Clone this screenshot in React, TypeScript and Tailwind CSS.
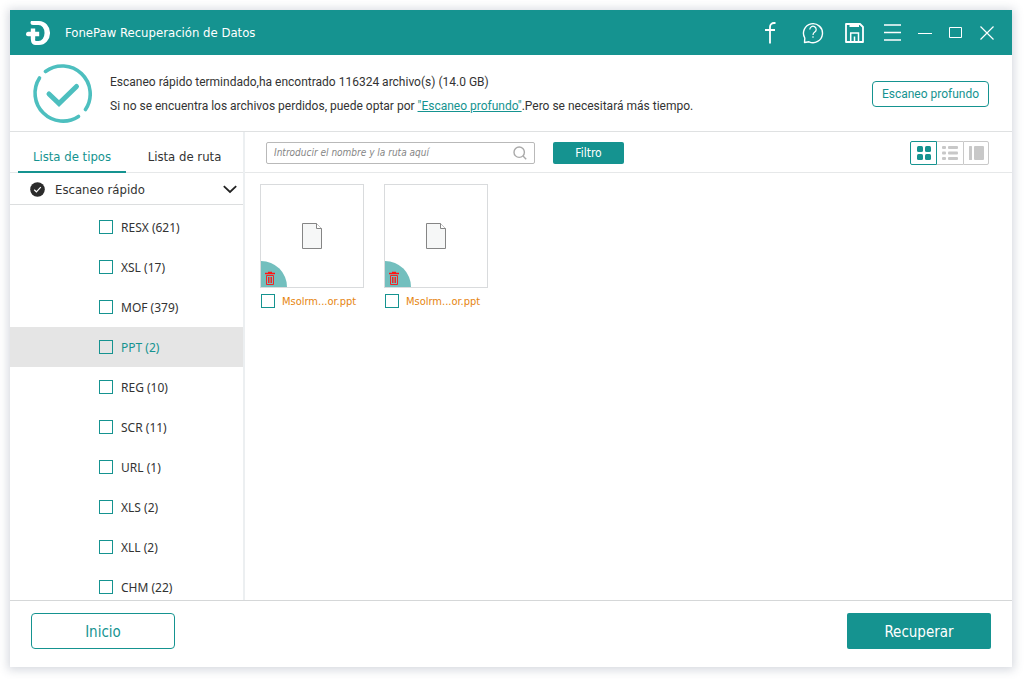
import { useState } from 'react';
import type { ReactNode } from 'react';

const fileTypes = [
  { name: 'RESX', count: 621 },
  { name: 'XSL', count: 17 },
  { name: 'MOF', count: 379 },
  { name: 'PPT', count: 2 },
  { name: 'REG', count: 10 },
  { name: 'SCR', count: 11 },
  { name: 'URL', count: 1 },
  { name: 'XLS', count: 2 },
  { name: 'XLL', count: 2 },
  { name: 'CHM', count: 22 },
];

const files = [
  { id: 'file-1', name: 'Msolrm...or.ppt' },
  { id: 'file-2', name: 'Msolrm...or.ppt' },
];

const checkboxClass =
  'size-3.5 shrink-0 appearance-none border border-[#159390] bg-transparent checked:bg-[#159390]';

function IconButton({ label, className, children }: { label: string; className: string; children: ReactNode }) {
  return (
    <button type="button" aria-label={label} className={`flex items-center justify-center ${className}`}>
      {children}
    </button>
  );
}

function TitleBar() {
  return (
    <header className="flex h-[45px] shrink-0 items-center bg-[#159390] pt-px pr-[18px] pl-4 text-white">
      <svg viewBox="0 0 24 24" className="size-6" fill="currentColor" aria-hidden="true">
        <path d="M5 0h8A11 11.800 0 0 1 24 12a11 11.800 0 0 1-11 12H9.500A4.500 4.500 0 0 1 5 19.500V18h4v.8a1.200 1.200 0 0 0 1.200 1.200h2.300A6 7.800 0 0 0 18.500 12a6 7.800 0 0 0-6-8H7A2.500 2.500 0 0 1 4.500 1.500z" />
        <path d="M4.800 7.500h4.400v3.200h4v4.600h-4V18.500H4.800v-3.200H2A2.200 2.200 0 0 1 0 13a2.300 2.300 0 0 1 2-2.300h2.800z" />
      </svg>
      <h1 className="ml-[15px] grow text-[13px]">FonePaw Recuperación de Datos</h1>
      <div className="flex gap-5">
        <IconButton label="Facebook" className="size-[22px]">
          <svg viewBox="0 0 22 22" className="size-[22px]" fill="none" stroke="currentColor" strokeWidth="1.800">
            <path d="M15.500 1h-1.500A4 4 0 0 0 10 5V21.500M5 8h10" />
          </svg>
        </IconButton>
        <IconButton label="Ayuda" className="size-[22px]">
          <svg viewBox="0 0 22 22" className="size-[22px]" fill="none" stroke="currentColor" strokeWidth="1.400" strokeLinejoin="round">
            <path d="M2.500 20.500l.3-4.500A9.500 9.500 0 1 1 7 19.800z" />
            <path d="M7.800 7.500a3.200 3.200 0 1 1 5 2.600c-1.200.8-1.800 1.200-1.800 2.900M11 14.300v1.400" strokeWidth="1.200" />
          </svg>
        </IconButton>
        <IconButton label="Guardar" className="size-[22px]">
          <svg viewBox="0 0 22 22" className="size-[22px]" fill="none" stroke="currentColor" strokeWidth="1.800">
            <path d="M2 2h14l3 3v15H2z" strokeLinejoin="round" />
            <path d="M5.500 2h9.500v3H5.500z" fill="currentColor" stroke="none" />
            <path d="M6.700 20V11h7.800v9M10.500 14.500V19" strokeWidth="1.500" />
          </svg>
        </IconButton>
      </div>
      <IconButton label="Menú" className="ml-4 size-5">
        <svg viewBox="0 0 20 20" className="size-5" fill="none" stroke="currentColor" strokeWidth="1.600">
          <path d="M2 2h17M2 9.500h17M2 17h17" />
        </svg>
      </IconButton>
      <div className="ml-4 flex gap-[17px]">
        <IconButton label="Minimizar" className="size-3.5">
          <svg viewBox="0 0 14 14" className="size-3.5" fill="none" stroke="currentColor">
            <path d="M0 7.500h14" />
          </svg>
        </IconButton>
        <IconButton label="Maximizar" className="size-3.5">
          <svg viewBox="0 0 14 14" className="size-3.5" fill="none" stroke="currentColor">
            <path d="M.5 1.500h12v10H.5z" />
          </svg>
        </IconButton>
        <IconButton label="Cerrar" className="size-3.5">
          <svg viewBox="0 0 14 14" className="size-3.5" fill="none" stroke="currentColor" strokeWidth="1.200">
            <path d="M.5.5l13 13M13.500.5l-13 13" />
          </svg>
        </IconButton>
      </div>
    </header>
  );
}

function ScanStatus() {
  return (
    <section className="flex h-[77px] shrink-0 items-center border-b border-[#dfe1e2] pt-px pr-[23px] pl-[22px]">
      <svg viewBox="0 0 60 60" className="size-[60px] shrink-0" fill="none" stroke="#4dbfbf" strokeLinecap="round" aria-hidden="true">
        <path d="M13.500 7.500A28 28 0 0 1 53.500 45.500" strokeWidth="3.600" />
        <path d="M7.500 14A28 28 0 0 0 46.500 52.500" strokeWidth="3.600" />
        <path d="M17 30l10 9.500L44.500 22.500" strokeWidth="5" strokeLinejoin="miter" />
      </svg>
      <div className="ml-[18px] grow font-[Roboto,sans-serif] text-[12px] leading-6 text-[#333]">
        <p>Escaneo rápido termindado,ha encontrado 116324 archivo(s) (14.0 GB)</p>
        <p>
          Si no se encuentra los archivos perdidos, puede optar por{' '}
          <a href="#escaneo-profundo" className="text-[#159390] underline">
            "Escaneo profundo"
          </a>
          .Pero se necesitará más tiempo.
        </p>
      </div>
      <button type="button" className="h-[26px] w-[117px] shrink-0 rounded border border-[#159390] font-[Roboto,sans-serif] text-[12px] text-[#159390]">
        Escaneo profundo
      </button>
    </section>
  );
}

function Sidebar({ selected, onSelect }: { selected: string; onSelect: (name: string) => void }) {
  return (
    <aside className="flex min-h-0 w-[235px] shrink-0 flex-col border-r-2 border-[#eceff1]">
      <div role="tablist" className="flex h-[41px] shrink-0 border-b border-[#e6e8e9] pl-2 text-[13px]">
        <button type="button" role="tab" aria-selected="true" className="-mb-px w-27 border-b-2 border-[#159390] pt-2.5 text-[#159390]">
          Lista de tipos
        </button>
        <button type="button" role="tab" aria-selected="false" className="grow pt-2.5 text-[#333]">
          Lista de ruta
        </button>
      </div>
      <button type="button" aria-expanded="true" className="flex h-8 shrink-0 items-center border-b border-[#dcdedf] pt-px pr-1.5 pl-5 text-[13px] text-[#333]">
        <svg viewBox="0 0 15 15" className="size-[15px]" aria-hidden="true">
          <circle cx="7.500" cy="7.500" r="7.300" fill="#2b2b2b" />
          <path d="M4.200 7.800l2.200 2 4.400-4.600" fill="none" stroke="#fff" strokeWidth="1.200" />
        </svg>
        <span className="ml-2.5 grow pt-0.5 text-left">Escaneo rápido</span>
        <svg viewBox="0 0 14 14" className="size-3.5" fill="none" stroke="#222" strokeWidth="1.800" aria-hidden="true">
          <path d="M.8 4.200L7 10l6.200-5.800" />
        </svg>
      </button>
      <ul className="min-h-0 grow overflow-y-auto pt-0.5 font-['Noto_Sans',sans-serif] text-[12px] [scrollbar-width:none]">
        {fileTypes.map(({ name, count }) => (
          <li
            key={name}
            className={`flex h-10 items-center gap-2 pl-[89px] ${name === selected ? 'bg-[#e5e5e5] text-[#159390]' : 'text-[#333]'}`}
            onClick={() => onSelect(name)}
          >
            <input id={`type-${name}`} type="checkbox" className={checkboxClass} />
            <label htmlFor={`type-${name}`} className="pt-0.5">
              {name} ({count})
            </label>
          </li>
        ))}
      </ul>
    </aside>
  );
}

function Toolbar() {
  return (
    <div className="flex h-[41px] shrink-0 items-center border-b border-[#e6e8e9] pt-px pr-[23px] pl-[21px]">
      <div className="flex h-[22px] w-[269px] items-center rounded-xs border border-[#b9b9b9] pr-[7px] pl-[7px]">
        <input
          type="text"
          aria-label="Buscar"
          placeholder="Introducir el nombre y la ruta aquí"
          className="min-w-0 grow text-[10px] italic outline-none placeholder:text-[#858585]"
        />
        <svg viewBox="0 0 14 14" className="size-3.5" fill="none" stroke="#a9a9a9" strokeWidth="1.400" aria-hidden="true">
          <circle cx="6.200" cy="6.200" r="5.200" />
          <path d="M10 10l3.200 3.200" />
        </svg>
      </div>
      <button type="button" className="ml-[18px] h-[22px] w-[71px] rounded-xs bg-[#159390] text-[12px] text-white">
        Filtro
      </button>
      <div className="ml-auto flex h-6">
        <button type="button" aria-label="Cuadrícula" className="flex w-[27px] items-center justify-center rounded-l-xs border border-[#159390]">
          <svg viewBox="0 0 14 14" className="size-3.5" fill="#159390">
            <rect width="6" height="6" rx="1.500" />
            <rect x="8" width="6" height="6" rx="1.500" />
            <rect y="8" width="6" height="6" rx="1.500" />
            <rect x="8" y="8" width="6" height="6" rx="1.500" />
          </svg>
        </button>
        <button type="button" aria-label="Lista" className="flex w-[26px] items-center justify-center border-y border-[#c9c9c9]">
          <svg viewBox="0 0 16 14" className="h-3.5 w-4" fill="#c8c8c8">
            <rect width="4" height="3" rx="1" />
            <rect x="6" width="10" height="3" rx="1" />
            <rect y="5.500" width="4" height="3" rx="1" />
            <rect x="6" y="5.500" width="10" height="3" rx="1" />
            <rect y="11" width="4" height="3" rx="1" />
            <rect x="6" y="11" width="10" height="3" rx="1" />
          </svg>
        </button>
        <button type="button" aria-label="Detalle" className="flex w-[26px] items-center justify-center rounded-r-xs border border-[#c9c9c9]">
          <svg viewBox="0 0 15 14" className="h-3.5 w-[15px]" fill="#c8c8c8">
            <rect width="3" height="14" rx=".5" />
            <rect x="5" width="10" height="14" rx="1" />
          </svg>
        </button>
      </div>
    </div>
  );
}

function FileCard({ id, name }: { id: string; name: string }) {
  return (
    <li className="w-26">
      <div className="relative flex size-26 items-center justify-center border border-[#d9dbdd]">
        <svg viewBox="0 0 20 26" className="h-[26px] w-5" fill="#f6f7f7" stroke="#858585" aria-hidden="true">
          <path d="M.5.5h14l5 5v20H.5z" />
          <path d="M14.500.5v5h5" fill="#fff" />
        </svg>
        <button type="button" aria-label="Eliminado" className="absolute bottom-0 left-0 size-[26px] rounded-tr-full bg-[#73bfbe]">
          <svg viewBox="0 0 26 26" className="size-[26px]" fill="none" stroke="#ff1414">
            <path d="M4 12.500h10M7 11.500h4" strokeWidth="1.300" />
            <path d="M5.500 14.500h7v9h-7zM7.500 16v6M9 16v6M10.500 16v6" strokeWidth=".9" />
          </svg>
        </button>
      </div>
      <div className="mt-[5px] flex h-4 items-center gap-[7px] pl-px text-[11px] text-[#e6850f]">
        <input id={id} type="checkbox" className={checkboxClass} />
        <label htmlFor={id} className="pt-0.5 whitespace-nowrap">
          {name}
        </label>
      </div>
    </li>
  );
}

export default function App() {
  const [selected, setSelected] = useState('PPT');

  return (
    <div className="h-screen bg-white pt-2.5 pr-3 pb-3 pl-2.5 font-['DejaVu_Sans_Condensed','Noto_Sans',sans-serif]">
      <div className="flex h-full flex-col bg-white shadow-[0_1px_9px_2px_rgba(70,80,110,0.22)]">
        <TitleBar />
        <ScanStatus />
        <div className="flex min-h-0 grow">
          <Sidebar selected={selected} onSelect={setSelected} />
          <main className="flex min-w-0 grow flex-col">
            <Toolbar />
            <ul className="flex flex-wrap gap-5 px-[15px] pt-[11px]">
              {files.map((file) => (
                <FileCard key={file.id} id={file.id} name={file.name} />
              ))}
            </ul>
          </main>
        </div>
        <footer className="flex h-[67px] shrink-0 items-start justify-between border-t border-[#d5d7d8] pt-3 pr-[21px] pl-[21px] text-[15px]">
          <button type="button" className="h-9 w-36 rounded border border-[#159390] pt-0.5 text-[#159390]">
            Inicio
          </button>
          <button type="button" className="h-9 w-36 rounded-xs bg-[#159390] pt-0.5 text-white">
            Recuperar
          </button>
        </footer>
      </div>
    </div>
  );
}
